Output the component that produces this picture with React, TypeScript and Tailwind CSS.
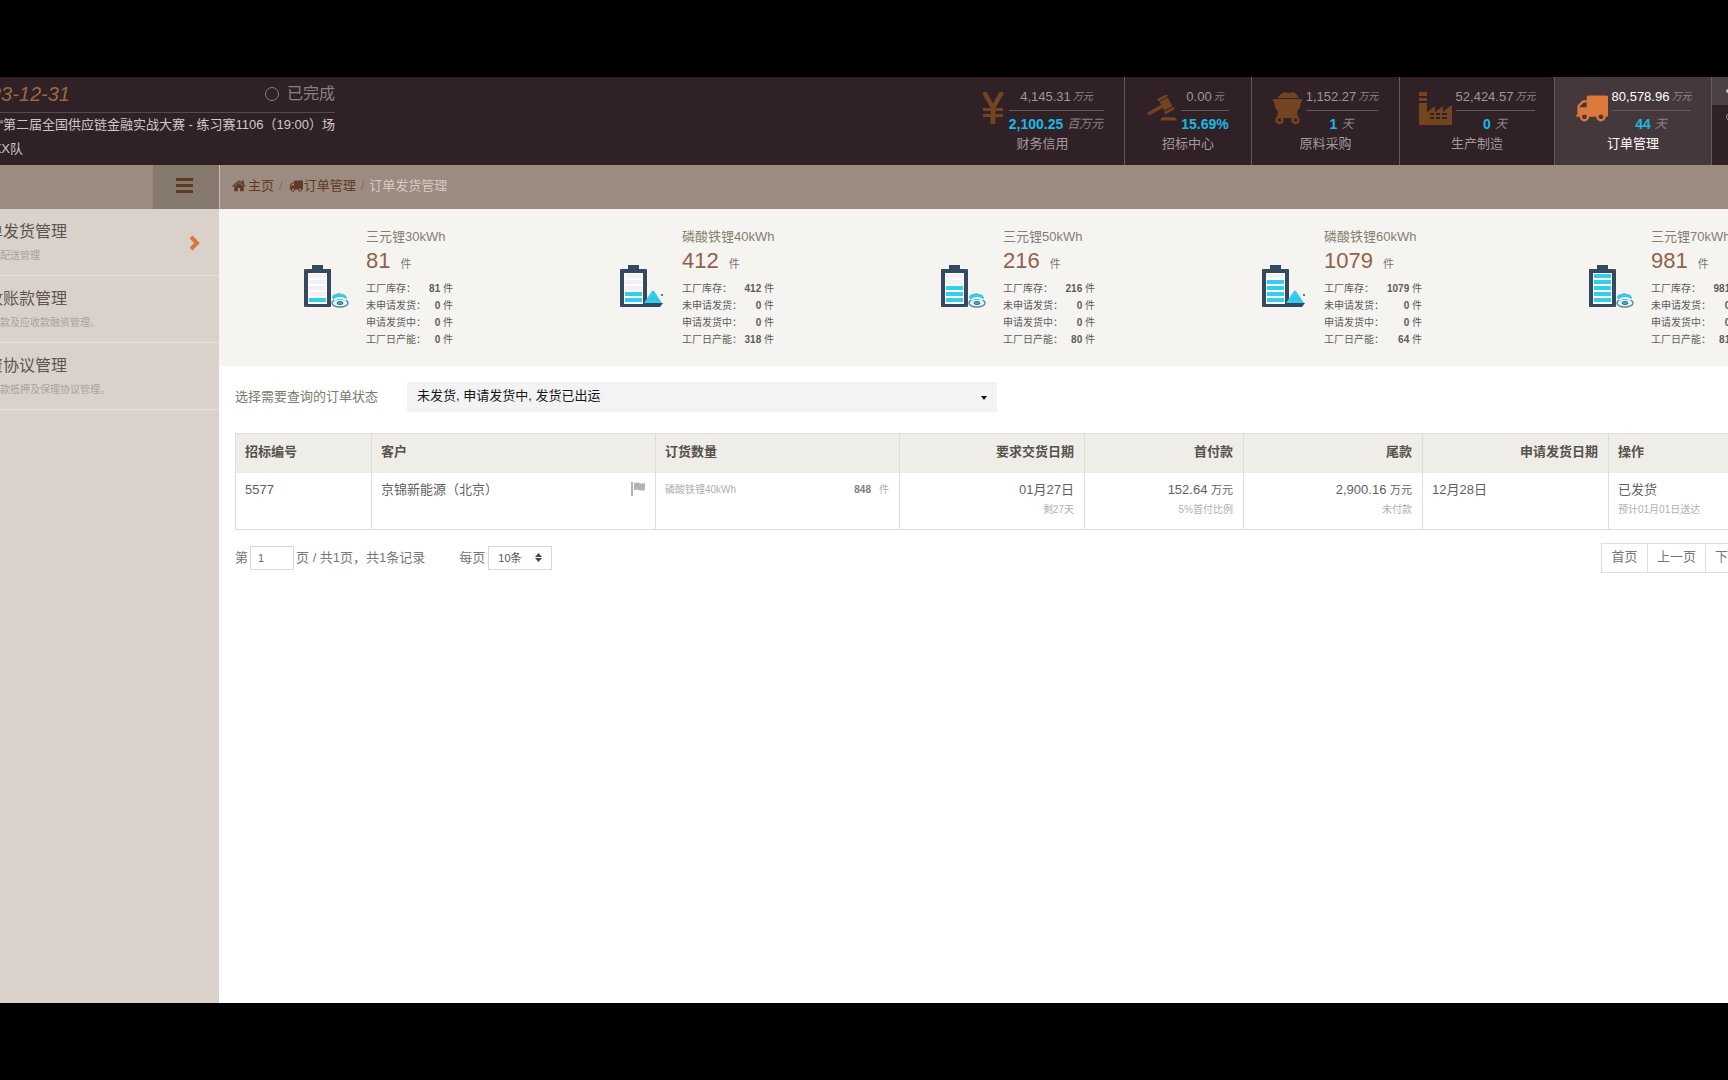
import React from "react";

function TruckIcon({ className }: { className: string }) {
  return (
    <svg viewBox="0 256 1792 1408" fill="currentColor" className={className} aria-hidden="true">
      <path d="M640 1408q0-52-38-90t-90-38-90 38-38 90 38 90 90 38 90-38 38-90zm-384-512h384v-256h-158q-13 0-22 9l-195 195q-9 9-9 22v30zm1280 512q0-52-38-90t-90-38-90 38-38 90 38 90 90 38 90-38 38-90zm256-1088v1024q0 15-4 26.5t-13.5 18.5-16.5 11.5-23.5 6-22.5 2-25.5 0-22.5-.5q0 106-75 181t-181 75-181-75-75-181h-384q0 106-75 181t-181 75-181-75-75-181h-64q-3 0-22.5.5t-25.5 0-22.5-2-23.5-6-16.5-11.5-13.5-18.5-4-26.5q0-26 19-45t45-19v-320q0-8-.5-35t0-38 2.5-34.5 6.5-37 14-30.5 22.5-30l198-198q19-19 50.5-32t58.5-13h160v-192q0-26 19-45t45-19h1024q26 0 45 19t19 45z" />
    </svg>
  );
}

function HomeIcon() {
  return (
    <svg viewBox="64 256 1664 1312" fill="currentColor" className="h-3 w-[14px]" aria-hidden="true">
      <path d="M1472 992v480q0 26-19 45t-45 19h-384v-384h-256v384h-384q-26 0-45-19t-19-45v-480q0-1 .5-3t.5-3l575-474 575 474q1 2 1 6zm223-69l-62 74q-8 9-21 11h-3q-13 0-21-7l-692-577-692 577q-12 8-24 7-13-2-21-11l-62-74q-8-10-7-23.5t11-21.5l719-599q32-26 76-26t76 26l244 204v-195q0-14 9-23t23-9h192q14 0 23 9t9 23v408l219 182q10 8 11 21.5t-7 23.5z" />
    </svg>
  );
}

function YenIcon() {
  return (
    <svg viewBox="0 0 24 32" className="h-8 w-6" fill="none" stroke="currentColor" aria-hidden="true">
      <path d="M3 0 12 16 21 0" strokeWidth="4.500" />
      <path d="M12 14v18" strokeWidth="5" />
      <path d="M2 17.500h20M2 23.500h20" strokeWidth="3" />
    </svg>
  );
}

function GavelIcon() {
  return (
    <svg viewBox="0 0 90 80" className="h-[27px] w-[30px]" fill="currentColor" aria-hidden="true">
      <g transform="translate(57 27) rotate(-29)">
        <rect x="-14" y="-15" width="28" height="30" />
        <rect x="-17" y="-26" width="34" height="8" rx="4" />
        <rect x="-17" y="18" width="34" height="8" rx="4" />
        <rect x="-62" y="-5" width="50" height="10" rx="4" />
      </g>
      <path d="M40 76q2-10 10-10h28q9 0 11 10z" />
    </svg>
  );
}

function CartIcon() {
  return (
    <svg viewBox="0 0 29 33" className="h-[33px] w-[29px]" fill="currentColor" aria-hidden="true">
      <path d="M4 6 8 2l4-2 4 1 5-1 3 3 2 3z" />
      <rect x="0" y="7" width="29" height="3" rx="1" />
      <path d="M1 10h27l-1 5-3 5 1 6H4l1-6-3-5z" />
      <circle cx="6.500" cy="28" r="3" fill="none" stroke="currentColor" strokeWidth="2.500" />
      <circle cx="22.500" cy="28" r="3" fill="none" stroke="currentColor" strokeWidth="2.500" />
    </svg>
  );
}

function FactoryIcon() {
  return (
    <svg viewBox="0 0 33 33" className="h-[33px] w-[33px]" fill="currentColor" aria-hidden="true">
      <path d="M0 0h8v4H0zM0 6h8v3H0z" />
      <path
        fillRule="evenodd"
        d="M0 11h8v9l8-6v6l8-6v6l7-6h2v19H0zM11 21v2h4v-2zm6 0v2h4v-2zm6 0v2h5v-2zM11 25v2h4v-2zm6 0v2h4v-2zm6 0v2h5v-2z"
      />
    </svg>
  );
}

function BatteryIcon({ level, material }: { level: number; material: "coil" | "powder" }) {
  return (
    <svg viewBox="0 0 46 44" className="mt-[38px] h-[44px] w-[46px] flex-none" aria-hidden="true">
      <path d="M8 0h11v5h-11z" fill="#34495e" />
      <rect x="0" y="4" width="27" height="38" rx="1" fill="#34495e" />
      <rect x="4" y="8" width="19" height="31" fill="#fdfdfd" />
      {[4, 3, 2, 1, 0].map((cell, i) => (
        <rect
          key={cell}
          x="5"
          y={9 + i * 6}
          width="17"
          height="4"
          fill={cell < level ? "#33cdee" : "#f1f1f3"}
        />
      ))}
      {material === "coil" ? (
        <g>
          <path d="M28 32q1-3 4-3l3-1 3 1q4 0 5 4l-2 3H30z" fill="#3fc8e6" />
          <ellipse cx="36" cy="38" rx="8" ry="4" fill="#dff6fa" stroke="#5a8c9c" strokeWidth="1.500" />
          <path d="M30 35q6-4 12 0" fill="none" stroke="#e9fbff" strokeWidth="2" />
          <ellipse cx="36" cy="38" rx="3" ry="1.500" fill="#3fb4d0" stroke="#3b6d80" />
        </g>
      ) : (
        <g>
          <path d="M24 38 32 26q1-1 2 0l8 12z" fill="#33cdee" />
          <path d="M30 35l4-3 4 3" fill="none" stroke="#27b6d8" />
          <path d="M24 38h19l-3 4H26z" fill="#34495e" />
          <circle cx="42" cy="30" r="1" fill="#34495e" />
        </g>
      )}
    </svg>
  );
}

type Tab = {
  name: string;
  icon: React.ReactNode;
  value: string;
  unit: string;
  second: string;
  secondUnit: string;
  width: string;
  active?: boolean;
};

const tabs: Tab[] = [
  { name: "财务信用", icon: <YenIcon />, value: "4,145.31", unit: "万元", second: "2,100.25", secondUnit: "百万元", width: "w-[164px]" },
  { name: "招标中心", icon: <GavelIcon />, value: "0.00", unit: "元", second: "15.69%", secondUnit: "", width: "w-[127px]" },
  { name: "原料采购", icon: <CartIcon />, value: "1,152.27", unit: "万元", second: "1", secondUnit: "天", width: "w-[148px]" },
  { name: "生产制造", icon: <FactoryIcon />, value: "52,424.57", unit: "万元", second: "0", secondUnit: "天", width: "w-[155px]" },
  { name: "订单管理", icon: <TruckIcon className="h-[27px] w-[33px]" />, value: "80,578.96", unit: "万元", second: "44", secondUnit: "天", width: "w-[157px]", active: true },
];

function HeaderTab({ tab }: { tab: Tab }) {
  return (
    <a
      href="#"
      className={`flex flex-none flex-col items-center border-r border-[#665a5e] pt-[10px] ${tab.width} ${tab.active ? "bg-[#45383c]" : ""}`}
    >
      <div className="flex items-start gap-1">
        <span className={`flex h-[42px] items-center ${tab.active ? "text-[#dc783a]" : "text-[#74431f]"}`}>{tab.icon}</span>
        <div className="flex flex-col items-center">
          <div className={`flex h-6 w-full items-center justify-center gap-[2px] border-b border-[#65585c] pb-1 text-[13px] ${tab.active ? "text-white" : "text-[#a1959a]"}`}>
            <span>{tab.value}</span>
            <span className="text-[10px] text-[#94898d] italic">{tab.unit}</span>
          </div>
          <div className="flex h-[26px] items-center gap-[3px] text-sm">
            <b className="text-[#19b9e4]">{tab.second}</b>
            {tab.secondUnit && <span className="px-px text-xs text-[#8c8185] italic">{tab.secondUnit}</span>}
          </div>
        </div>
      </div>
      <span className={`-mt-px text-[13px] leading-4 ${tab.active ? "text-white" : "text-[#a3989c]"}`}>{tab.name}</span>
    </a>
  );
}

const products = [
  { name: "三元锂30kWh", total: 81, nums: [81, 0, 0, 0], level: 1, material: "coil", width: "w-[87px]" },
  { name: "磷酸铁锂40kWh", total: 412, nums: [412, 0, 0, 318], level: 2, material: "powder", width: "w-[92px]" },
  { name: "三元锂50kWh", total: 216, nums: [216, 0, 0, 80], level: 3, material: "coil", width: "w-[92px]" },
  { name: "磷酸铁锂60kWh", total: 1079, nums: [1079, 0, 0, 64], level: 4, material: "powder", width: "w-[98px]" },
  { name: "三元锂70kWh", total: 981, nums: [981, 0, 0, 81], level: 5, material: "coil", width: "w-[92px]" },
] as const;

const stockLabels = ["工厂库存：", "未申请发货：", "申请发货中：", "工厂日产能："];

function ProductCard({ p }: { p: (typeof products)[number] }) {
  return (
    <div className="flex flex-none gap-4">
      <BatteryIcon level={p.level} material={p.material} />
      <div className={`whitespace-nowrap ${p.width}`}>
        <div className="text-[13px] leading-5 text-[#857f72]">{p.name}</div>
        <div className="flex items-baseline gap-[10px] leading-7">
          <span className="text-[22px] text-[#93614a]">{p.total}</span>
          <span className="text-[11px] text-[#777777]">件</span>
        </div>
        <dl className="mt-[2px] text-[10px] leading-[17px] text-[#5c5c5c]">
          {stockLabels.map((label, i) => (
            <div key={label} className="flex justify-between">
              <dt>{label}</dt>
              <dd className="-ml-2">
                <b className="font-bold">{p.nums[i]}</b> 件
              </dd>
            </div>
          ))}
        </dl>
      </div>
    </div>
  );
}

const menu = [
  { title: "订单发货管理", note: "配送管理", active: true },
  { title: "应收账款管理", note: "款及应收款融资管理。" },
  { title: "融资协议管理", note: "款抵押及保理协议管理。" },
];

const th = "h-[39px] border-l border-[#deddd8] pr-[10px] pb-1 pl-[9px] font-bold";
const td = "h-[57px] border-l border-[#deddd8] pr-[10px] pl-[9px] pt-[7px] align-top";
const note = "pt-px text-[10px] leading-5 text-[#b0b0b0]";

export default function App() {
  return (
    <div className="flex h-screen flex-col overflow-hidden bg-black py-[77px] font-['Liberation_Sans','Noto_Sans_CJK_SC',sans-serif] whitespace-nowrap">
      <header className="flex h-[88px] flex-none bg-[#302127]">
        <div className="flex w-[335px] flex-none flex-col">
          <div className="flex h-9 items-center justify-between border-b border-[#56494d] pb-[2px]">
            <div className="flex w-[70px] flex-none justify-end overflow-hidden">
              <time className="text-xl leading-8 text-[#9c683f] italic">2023-12-31</time>
            </div>
            <div className="flex items-center gap-2 text-base text-[#8a7f83]">
              <span className="size-[14px] rounded-full border border-[#8a7f83]" />
              已完成
            </div>
          </div>
          <div className="flex h-6 items-center justify-end text-[13px] text-[#cfc7ca]">
            杯“第二届全国供应链金融实战大赛 - 练习赛1106（19:00）场
          </div>
          <div className="flex h-6 w-[23px] items-center justify-end overflow-hidden text-[13px] text-[#cfc7ca]">
            XX队
          </div>
        </div>
        <nav className="flex flex-1 justify-end">
          {tabs.map((tab) => (
            <HeaderTab key={tab.name} tab={tab} />
          ))}
        </nav>
        <div className="flex w-4 flex-none flex-col overflow-hidden">
          <div className="flex h-7 flex-none items-center bg-[#4b4044] pl-[14px]">
            <span className="size-1 flex-none rounded-full bg-[#c9c1c4]" />
          </div>
          <div className="flex h-6 items-center pl-[14px]">
            <span className="h-2 w-3 flex-none rounded border border-[#9a8f93]" />
          </div>
        </div>
      </header>

      <div className="flex min-h-0 flex-1">
        <aside className="w-[219px] flex-none overflow-hidden bg-[#dbd1cb]">
          <div className="flex h-11 justify-end bg-[#9c8b81]">
            <button aria-label="菜单" className="flex w-[66px] items-center justify-center bg-[#867a6e] pr-1 pb-1 text-[#5f3b25]">
              <svg viewBox="0 0 17 16" className="h-4 w-[17px]" fill="currentColor" aria-hidden="true">
                <path d="M0 1h17v3H0zM0 7h17v3H0zM0 13h17v3H0z" />
              </svg>
            </button>
          </div>
          <ul>
            {menu.map((m) => (
              <li key={m.title} className="border-b border-[#e8e1dc]">
                <a href="#" className="flex h-[66px] items-center justify-between pt-[2px] pr-[18px]">
                  <span className="flex flex-col gap-[2px]">
                    <span className="-ml-[29px] text-base leading-6 text-[#5b5552]">{m.title}</span>
                    <span className="text-[10px] leading-5 text-[#aaa29e]">{m.note}</span>
                  </span>
                  {m.active && (
                    <svg viewBox="0 0 12 16" className="h-4 w-3" fill="none" stroke="#d9773f" strokeWidth="4" aria-hidden="true">
                      <path d="M2 2l6 6-6 6" />
                    </svg>
                  )}
                </a>
              </li>
            ))}
          </ul>
        </aside>

        <main className="min-w-0 flex-1 overflow-hidden bg-white">
          <nav className="flex h-11 items-center border-l border-[#c9bfb8] bg-[#9c8b81] pb-[2px] pl-3 text-[13px] text-[#5f3b25]">
            <a href="#" className="flex items-center gap-[2px]">
              <HomeIcon />
              主页
            </a>
            <span className="pr-[6px] pl-[5px] text-[#7d6b60]">/</span>
            <a href="#" className="flex items-center gap-px">
              <TruckIcon className="h-3 w-[14px]" />
              订单管理
            </a>
            <span className="px-[5px] text-[#7d6b60]">/</span>
            <span className="text-[#d5cac3]">订单发货管理</span>
          </nav>

          <section className="flex h-[157px] gap-[167px] overflow-hidden border-t border-[#f8efe6] bg-[#f5f4f0] pt-[17px] pl-[85px]">
            {products.map((p) => (
              <ProductCard key={p.name} p={p} />
            ))}
          </section>

          <div className="flex h-[67px] items-center pb-[5px] pl-4">
            <label htmlFor="status" className="w-[172px] flex-none text-[13px] text-[#7d7a6c]">
              选择需要查询的订单状态
            </label>
            <div className="relative w-[590px]">
              <select id="status" className="h-[30px] w-full appearance-none bg-[#f3f3f3] px-[10px] pb-[2px] text-[13px] text-[#161616]">
                <option>未发货, 申请发货中, 发货已出运</option>
              </select>
              <svg viewBox="0 0 6 4" className="pointer-events-none absolute top-[14px] right-[10px] h-1 w-[6px]" aria-hidden="true">
                <path d="M0 0h6L3 4z" fill="#111" />
              </svg>
            </div>
          </div>

          <div className="pl-4">
            <table className="w-full table-fixed border-y border-[#deddd8] text-[13px] text-[#5f5f5f]">
              <colgroup>
                <col className="w-[136px]" />
                <col className="w-[284px]" />
                <col className="w-[244px]" />
                <col className="w-[185px]" />
                <col className="w-[159px]" />
                <col className="w-[179px]" />
                <col className="w-[186px]" />
                <col />
              </colgroup>
              <thead className="bg-[#efede8] text-left text-[#56534b]">
                <tr>
                  <th className={th}>招标编号</th>
                  <th className={th}>客户</th>
                  <th className={th}>订货数量</th>
                  <th className={`${th} text-right`}>要求交货日期</th>
                  <th className={`${th} text-right`}>首付款</th>
                  <th className={`${th} text-right`}>尾款</th>
                  <th className={`${th} text-right`}>申请发货日期</th>
                  <th className={th}>操作</th>
                </tr>
              </thead>
              <tbody>
                <tr>
                  <td className={td}>5577</td>
                  <td className={td}>
                    <div className="flex items-center justify-between">
                      京锦新能源（北京）
                      <svg viewBox="0 0 14 14" className="size-[14px]" fill="#b3b3b3" aria-hidden="true">
                        <path d="M0 0h2v14H0zM3 1q3-1 5 0 3 1 6 0v7q-3 1-6 0-2-1-5 0z" />
                      </svg>
                    </div>
                  </td>
                  <td className={td}>
                    <div className="flex h-5 items-center justify-between text-[10px] text-[#aeaeae]">
                      磷酸铁锂40kWh
                      <span>
                        <b className="mr-2 font-bold text-[#7d7d7d]">848</b>件
                      </span>
                    </div>
                  </td>
                  <td className={`${td} text-right`}>
                    01月27日
                    <div className={note}>剩27天</div>
                  </td>
                  <td className={`${td} text-right`}>
                    152.64 <span className="text-[11px]">万元</span>
                    <div className={note}>5%首付比例</div>
                  </td>
                  <td className={`${td} text-right`}>
                    2,900.16 <span className="text-[11px]">万元</span>
                    <div className={note}>未付款</div>
                  </td>
                  <td className={td}>12月28日</td>
                  <td className={td}>
                    已发货
                    <div className={note}>预计01月01日送达</div>
                  </td>
                </tr>
              </tbody>
            </table>
          </div>

          <div className="mt-[13px] flex items-center justify-between pl-4 text-[13px] text-[#777777]">
            <div className="flex items-center">
              <label htmlFor="page">第</label>
              <input id="page" defaultValue="1" className="mx-[2px] h-6 w-11 border border-[#d9d9d4] px-[7px] text-[11px] text-[#666666]" />
              页 / 共1页，共1条记录
              <label htmlFor="size" className="ml-[34px]">
                每页
              </label>
              <div className="relative ml-[3px]">
                <select id="size" className="h-6 w-16 appearance-none border border-[#d9d9d4] px-[9px] text-[11px] text-[#555555]">
                  <option>10条</option>
                </select>
                <svg viewBox="0 0 7 9" className="pointer-events-none absolute top-[7px] right-[10px] h-[9px] w-[7px]" fill="#444" aria-hidden="true">
                  <path d="M0 4l3.500-4L7 4zM0 5h7L3.500 9z" />
                </svg>
              </div>
            </div>
            <div className="flex w-[127px] overflow-hidden">
              <button className="h-[30px] w-[47px] flex-none border border-[#dededa] pb-[3px]">首页</button>
              <button className="-ml-px h-[30px] w-[59px] flex-none border border-[#dededa] pb-[3px]">上一页</button>
              <button className="-ml-px h-[30px] w-[59px] flex-none border border-[#dededa] pb-[3px]">下一页</button>
            </div>
          </div>
        </main>
      </div>
    </div>
  );
}
